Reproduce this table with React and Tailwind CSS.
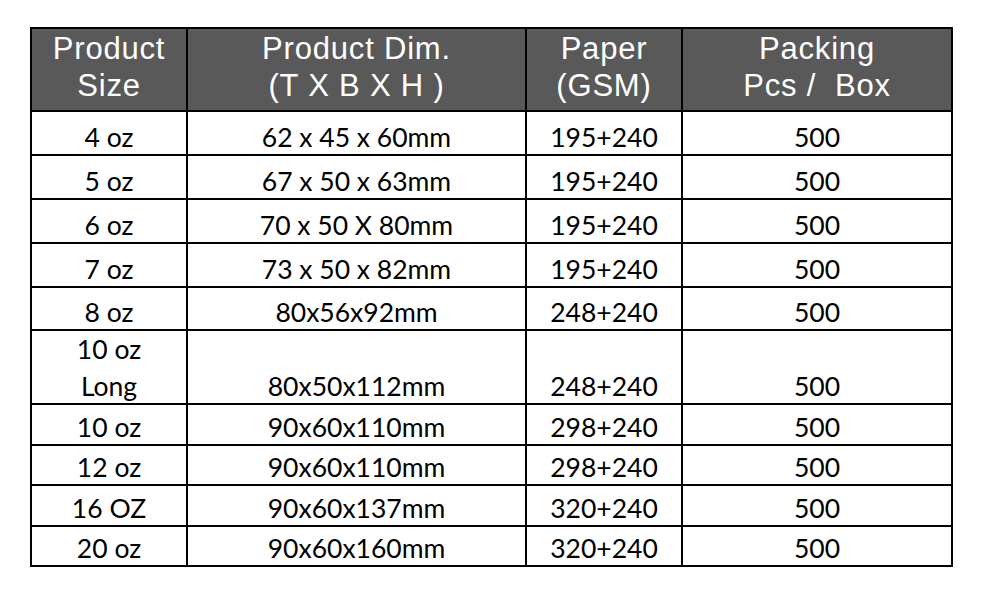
export default function App() {
  const rows = [
    { size: "4 oz", dim: "62 x 45 x 60mm", paper: "195+240", pcs: "500", h: "h-[44px]" },
    { size: "5 oz", dim: "67 x 50 x 63mm", paper: "195+240", pcs: "500", h: "h-[44px]" },
    { size: "6 oz", dim: "70 x 50 X 80mm", paper: "195+240", pcs: "500", h: "h-[44px]" },
    { size: "7 oz", dim: "73 x 50 x 82mm", paper: "195+240", pcs: "500", h: "h-[44px]" },
    { size: "8 oz", dim: "80x56x92mm", paper: "248+240", pcs: "500", h: "h-[43px]" },
    { size: "10 oz\nLong", dim: "80x50x112mm", paper: "248+240", pcs: "500", h: "h-[74px]" },
    { size: "10 oz", dim: "90x60x110mm", paper: "298+240", pcs: "500", h: "h-[41px]" },
    { size: "12 oz", dim: "90x60x110mm", paper: "298+240", pcs: "500", h: "h-[40px]" },
    { size: "16 OZ", dim: "90x60x137mm", paper: "320+240", pcs: "500", h: "h-[41px]" },
    { size: "20 oz", dim: "90x60x160mm", paper: "320+240", pcs: "500", h: "h-[40px]" },
  ];

  const headers = [
    ["Product", "Size"],
    ["Product Dim.", "(T X B X H )"],
    ["Paper", "(GSM)"],
    ["Packing", "Pcs /\u00a0 Box"],
  ];

  const cols = "grid grid-cols-[156px_339px_156px_270px]";

  return (
    <div className="w-full h-[597px] bg-white">
      <div className="ml-[30px] pt-[27px] w-[923px]">
        <div className="border-l-2 border-t-2 border-black">
          {/* Header */}
          <div className={`${cols} h-[83px] bg-[#595959]`}>
            {headers.map((lines, i) => (
              <div
                key={i}
                className="flex flex-col items-center justify-center pb-[5px] border-r-2 border-b-2 border-black text-white text-[31px] leading-[37px] font-['Liberation_Sans',Arial,sans-serif] tracking-[0.8px]"
              >
                {lines.map((l, j) => (
                  <span key={j} className="whitespace-pre">
                    {l}
                  </span>
                ))}
              </div>
            ))}
          </div>

          {/* Body */}
          {rows.map((r, i) => (
            <div key={i} className={`${cols} ${r.h}`}>
              {[r.size, r.dim, r.paper, r.pcs].map((v, j) => (
                <div
                  key={j}
                  className="flex flex-col items-center justify-end pb-[1px] border-r-2 border-b-2 border-black text-black text-[26.5px] leading-[32px] font-['Lato',sans-serif]"
                >
                  {v.split("\n").map((l, k) => (
                    <span key={k} className={k > 0 ? "mt-[5px]" : ""}>
                      {l}
                    </span>
                  ))}
                </div>
              ))}
            </div>
          ))}
        </div>
      </div>
    </div>
  );
}
